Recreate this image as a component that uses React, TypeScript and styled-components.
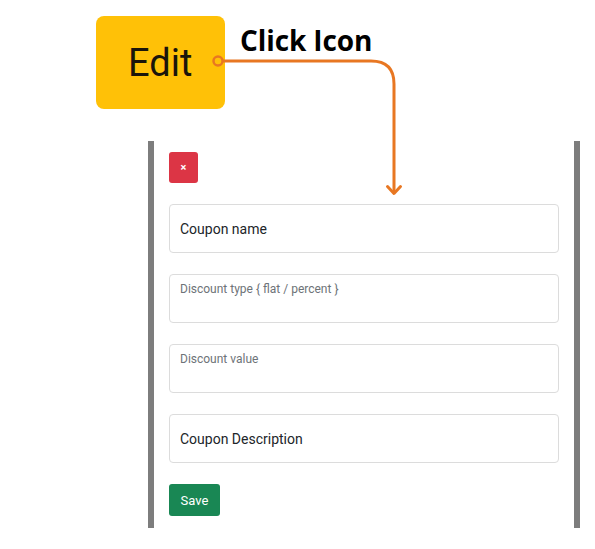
import React from "react";
import styled, { createGlobalStyle } from "styled-components";

const Global = createGlobalStyle`
  html, body { margin: 0; padding: 0; background: #ffffff; }
  body { font-family: Roboto, "Liberation Sans", sans-serif; }
`;

const Page = styled.div`
  position: relative;
  width: 595px;
  height: 549px;
  overflow: hidden;
  display: flex;
  flex-direction: column;
`;

const Header = styled.div`
  display: flex;
  align-items: flex-start;
  padding: 16px 0 0 96px;
  gap: 15px;
`;

const EditButton = styled.div`
  width: 129px;
  height: 93px;
  border-radius: 8px;
  background: #ffc107;
  display: flex;
  align-items: center;
  justify-content: flex-start;
  padding-left: 32px;
  box-sizing: border-box;
  font-family: Roboto, "Liberation Sans", sans-serif;
  font-size: 38px;
  color: #1a150b;
`;

const Callout = styled.div`
  margin-top: 6px;
  font-family: "Open Sans", "Liberation Sans", sans-serif;
  font-weight: 700;
  font-size: 28px;
  line-height: 36px;
  color: #000;
  letter-spacing: -0.1px;
`;

const Panel = styled.div`
  margin: 32px 0 0 148px;
  width: 432px;
  box-sizing: border-box;
  border-left: 6px solid #7d7d7d;
  border-right: 6px solid #7d7d7d;
  padding: 11px 15px 12px 15px;
  display: flex;
  flex-direction: column;
  align-items: flex-start;
  gap: 21px;
`;

const CloseButton = styled.div`
  width: 29px;
  height: 31px;
  border-radius: 3px;
  background: #dc3545;
  color: #fff;
  font-size: 11px;
  font-weight: 700;
  display: flex;
  align-items: center;
  justify-content: center;
`;

const Field = styled.div<{ $label?: boolean }>`
  width: 100%;
  height: 49px;
  box-sizing: border-box;
  border: 1px solid #dcdcdc;
  border-radius: 4px;
  background: #fff;
  padding: ${(p) => (p.$label ? "6px 10px 0" : "0 10px")};
  display: flex;
  align-items: ${(p) => (p.$label ? "flex-start" : "center")};
  font-size: ${(p) => (p.$label ? "12px" : "14px")};
  line-height: ${(p) => (p.$label ? "16px" : "20px")};
  color: ${(p) => (p.$label ? "#6e7378" : "#212529")};
`;

const SaveButton = styled.div`
  width: 51px;
  height: 32px;
  border-radius: 3px;
  background: #198754;
  color: #fff;
  font-size: 13px;
  display: flex;
  align-items: center;
  justify-content: center;
`;

const Overlay = styled.svg`
  position: absolute;
  left: 0;
  top: 0;
  pointer-events: none;
`;

export default function App() {
  return (
    <Page>
      <Global />
      <Header>
        <EditButton>Edit</EditButton>
        <Callout>Click Icon</Callout>
      </Header>
      <Panel>
        <CloseButton>×</CloseButton>
        <Field>Coupon name</Field>
        <Field $label>Discount type {"{"} flat / percent {"}"}</Field>
        <Field $label>Discount value</Field>
        <Field>Coupon Description</Field>
        <SaveButton>Save</SaveButton>
      </Panel>
      <Overlay width="595" height="549" viewBox="0 0 595 549">
        <circle cx="218" cy="61" r="4.5" fill="none" stroke="#e87722" strokeWidth="2.5" />
        <path
          d="M222.5 61 H371 Q394 61 394 84 V193"
          fill="none"
          stroke="#e87722"
          strokeWidth="3"
        />
        <path
          d="M387.5 186.5 L394 193.5 L400.5 186.5"
          fill="none"
          stroke="#e87722"
          strokeWidth="3"
          strokeLinecap="round"
          strokeLinejoin="round"
        />
      </Overlay>
    </Page>
  );
}
